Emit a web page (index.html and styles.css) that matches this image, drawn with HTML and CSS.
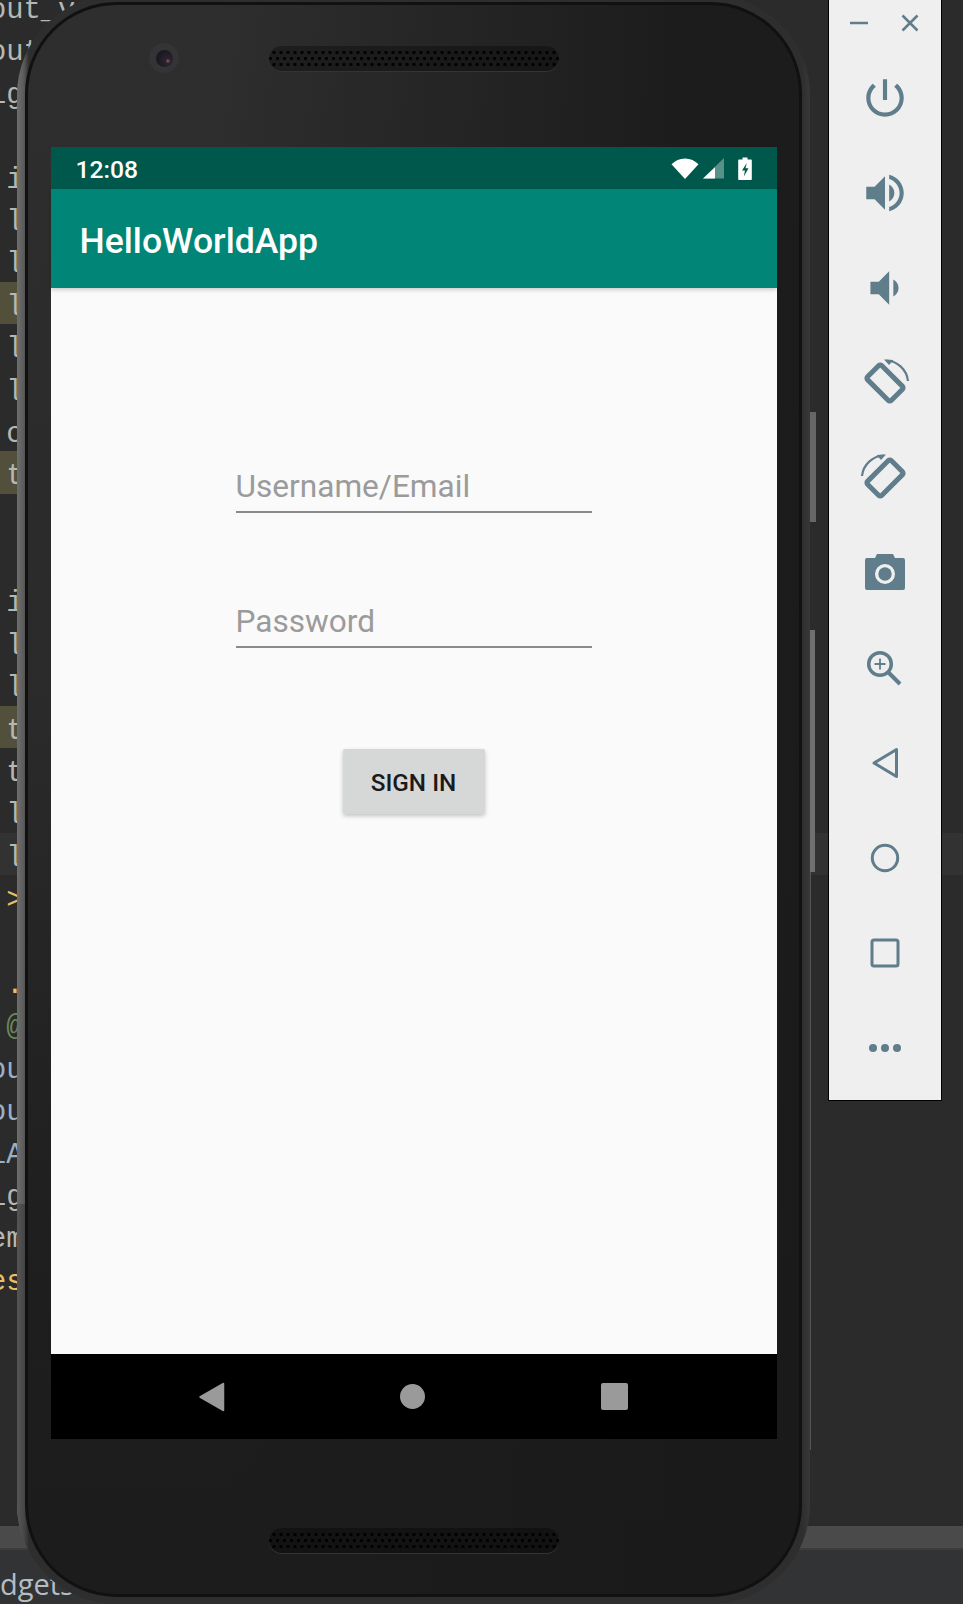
FILE: index.html
```html
<!DOCTYPE html>
<html lang="en">
<head>
    <meta charset="UTF-8">
    <meta name="viewport" content="width=device-width, initial-scale=1.0">
    <title>HelloWorldApp - Emulator</title>
    <link rel="stylesheet" href="styles.css">
</head>
<body>
    <!-- IDE behind the emulator, only the clipped left edge of the code shows -->
    <div class="editor">
        <div class="code">
            <div class="line">out_v</div>
            <div class="line">out</div>
            <div class="line">ig</div>
            <div class="line"></div>
            <div class="line">&nbsp;i</div>
            <div class="line">&nbsp;l</div>
            <div class="line">&nbsp;l</div>
            <div class="line mark">&nbsp;l</div>
            <div class="line">&nbsp;l</div>
            <div class="line">&nbsp;l</div>
            <div class="line">&nbsp;c</div>
            <div class="line mark">&nbsp;t</div>
            <div class="line"></div>
            <div class="line"></div>
            <div class="line">&nbsp;i</div>
            <div class="line">&nbsp;l</div>
            <div class="line">&nbsp;l</div>
            <div class="line mark">&nbsp;t</div>
            <div class="line">&nbsp;t</div>
            <div class="line">&nbsp;l</div>
            <div class="line current">&nbsp;l</div>
            <div class="line tag">&nbsp;&gt;</div>
            <div class="line"></div>
            <div class="line tag">..</div>
            <div class="line note">&nbsp;@</div>
            <div class="line blue">ou</div>
            <div class="line blue">ou</div>
            <div class="line blue">lA</div>
            <div class="line">ig</div>
            <div class="line">em</div>
            <div class="line tag">es</div>
        </div>
        <div class="scroll-strip"></div>
        <div class="status-strip">dgets</div>
    </div>

    <!-- emulator device -->
    <div class="phone">
        <span class="side-key power-key"></span>
        <span class="side-key volume-key"></span>
        <span class="side-key rim-line"></span>
        <div class="phone-body">
            <div class="bezel-top">
                <span class="camera"><span class="lens"></span></span>
                <span class="speaker"></span>
            </div>
            <div class="screen">
                <div class="status-bar">
                    <span class="clock">12:08</span>
                    <div class="status-icons">
                        <svg class="icon-wifi" width="28" height="21" viewBox="0 0 28 21"><path d="M14 21 0.5 6.200C4 2.600 8.600 0.400 14 0.400s10 2.200 13.500 5.800z" fill="#fff"/></svg>
                        <svg class="icon-signal" width="22" height="22" viewBox="0 0 22 22"><path d="M21 1 0 21.500h21z" fill="#fff" opacity=".35"/><path d="M12 10.300 0 21.500h12z" fill="#fff"/></svg>
                        <svg class="icon-battery" width="14" height="23" viewBox="0 0 14 23"><path fill-rule="evenodd" d="M1 2.500h3.500V.5h5v2H13a.8.8 0 0 1 .8.8v18.900a.8.8 0 0 1-.8.8H1a.8.8 0 0 1-.8-.8V3.300A.8.8 0 0 1 1 2.500zM8.800 6 4 13.500h3L5.800 19.500 10.500 11.200H7.500z" fill="#fff"/></svg>
                    </div>
                </div>
                <div class="app-bar">HelloWorldApp</div>
                <main class="content">
                    <div class="field">Username/Email</div>
                    <div class="field">Password</div>
                    <button class="sign-in">SIGN IN</button>
                </main>
                <div class="nav-bar">
                    <svg width="26" height="30" viewBox="0 0 26 30"><path d="M24.500 1.500v27L1 15z" fill="#9a9a9a" stroke="#9a9a9a" stroke-width="1.500" stroke-linejoin="round"/></svg>
                    <span class="nav-home"></span>
                    <span class="nav-recent"></span>
                </div>
            </div>
            <div class="bezel-bottom">
                <span class="speaker"></span>
            </div>
        </div>
    </div>

    <!-- emulator side toolbar -->
    <div class="toolbar">
        <div class="window-btns">
            <svg width="18" height="18" viewBox="0 0 18 18"><path d="M0 9h18" stroke="#607d8b" stroke-width="2.500"/></svg>
            <svg width="18" height="18" viewBox="0 0 18 18"><path d="M1.500 1.500l15 15M16.500 1.500l-15 15" stroke="#607d8b" stroke-width="2.500"/></svg>
        </div>
        <div class="tool">
            <svg width="50" height="50" viewBox="0 0 24 24"><path d="M13 3h-2v10h2V3zm4.830 2.170l-1.420 1.420C17.990 7.860 19 9.810 19 12c0 3.870-3.130 7-7 7s-7-3.130-7-7c0-2.190 1.010-4.140 2.580-5.420L6.170 5.170C4.230 6.820 3 9.260 3 12c0 4.970 4.030 9 9 9s9-4.030 9-9c0-2.740-1.230-5.180-3.170-6.830z"/></svg>
        </div>
        <div class="tool">
            <svg width="50" height="50" viewBox="0 0 24 24"><path d="M3 9v6h4l5 5V4L7 9H3zm13.500 3c0-1.770-1.020-3.290-2.500-4.030v8.050c1.480-.73 2.500-2.250 2.500-4.020zM14 3.230v2.060c2.890.86 5 3.540 5 6.710s-2.110 5.850-5 6.710v2.060c4.010-.91 7-4.490 7-8.770s-2.990-7.860-7-8.770z"/></svg>
        </div>
        <div class="tool">
            <svg width="50" height="50" viewBox="0 0 24 24"><path d="M18.500 12c0-1.770-1.020-3.290-2.500-4.030v8.050c1.480-.73 2.500-2.250 2.500-4.020zM5 9v6h4l5 5V4L9 9H5z"/></svg>
        </div>
        <div class="tool">
            <svg width="50" height="50" viewBox="0 0 50 50">
                <rect x="8.250" y="15" width="33.500" height="20" rx="2" transform="rotate(45 25 25)" fill="none" stroke="#607d8b" stroke-width="5"/>
                <path d="M26 2.500A23 23 0 0 1 48 23" fill="none" stroke="#607d8b" stroke-width="2.200"/>
                <path d="M24 1.500l9.500 0.500-4.500 5z"/>
            </svg>
        </div>
        <div class="tool">
            <svg width="50" height="50" viewBox="0 0 50 50">
                <rect x="8.250" y="15" width="33.500" height="20" rx="2" transform="rotate(-45 25 25)" fill="none" stroke="#607d8b" stroke-width="5"/>
                <path d="M24 2.500A23 23 0 0 0 2 23" fill="none" stroke="#607d8b" stroke-width="2.200"/>
                <path d="M26 1.500l-9.500 0.500 4.500 5z"/>
            </svg>
        </div>
        <div class="tool">
            <svg width="50" height="50" viewBox="0 0 50 50">
                <path fill-rule="evenodd" d="M7 10h8l2-4h16l2 4h8a2 2 0 0 1 2 2v28a2 2 0 0 1-2 2H7a2 2 0 0 1-2-2V12a2 2 0 0 1 2-2zM25 16a10 10 0 1 0 0 20 10 10 0 0 0 0-20z"/>
                <circle cx="25" cy="26" r="6.700"/>
            </svg>
        </div>
        <div class="tool">
            <svg width="50" height="50" viewBox="0 0 50 50">
                <circle cx="20" cy="21" r="11.300" fill="none" stroke="#607d8b" stroke-width="3.500"/>
                <path d="M28.500 29.500 40 41" stroke="#607d8b" stroke-width="4"/>
                <path d="M20 15.500v11M14.500 21h11" stroke="#607d8b" stroke-width="1.800"/>
            </svg>
        </div>
        <div class="tool">
            <svg width="50" height="50" viewBox="0 0 50 50"><path d="M36.500 11.500v27L14 25z" fill="none" stroke="#607d8b" stroke-width="3" stroke-linejoin="round"/></svg>
        </div>
        <div class="tool">
            <svg width="50" height="50" viewBox="0 0 50 50"><circle cx="25" cy="25" r="12.700" fill="none" stroke="#607d8b" stroke-width="3"/></svg>
        </div>
        <div class="tool">
            <svg width="50" height="50" viewBox="0 0 50 50"><rect x="12" y="12" width="26" height="26" rx="2" fill="none" stroke="#607d8b" stroke-width="3"/></svg>
        </div>
        <div class="tool">
            <svg width="50" height="50" viewBox="0 0 50 50"><circle cx="13" cy="25" r="4"/><circle cx="25" cy="25" r="4"/><circle cx="37" cy="25" r="4"/></svg>
        </div>
    </div>
</body>
</html>
```

FILE: styles.css
```css
html, body {
    margin: 0;
    padding: 0;
    height: 100%;
}

body {
    position: relative;
    width: 963px;
    height: 1604px;
    overflow: hidden;
    background-color: #2b2b2b; /* IDE background */
    font-family: Roboto, "Noto Sans", sans-serif;
}

/* IDE behind the emulator */
.editor {
    height: 100%;
    display: flex;
    flex-direction: column;
}

.code {
    flex: 1;
    font-family: "Liberation Mono", monospace;
    font-size: 28.800px;
    color: #b4b8b4;
    margin-top: -15px;
}

.line {
    height: 42.400px;
    line-height: 52.400px; /* glyphs sit low in the row */
    white-space: pre;
    text-indent: -11px;
}

.line.mark {
    width: 30px;
    background-color: #52503a;
}

.line.current {
    background-color: #323232;
}

.line.tag {
    color: #e8bf6a;
}

.line.note {
    color: #6a8759;
}

.line.blue {
    color: #9ab0c8;
}

.scroll-strip {
    height: 22px;
    background-color: #4a4a4a;
    flex-shrink: 0;
}

.status-strip {
    height: 56px;
    line-height: 56px;
    padding-top: 6px;
    flex-shrink: 0;
    box-sizing: border-box;
    background-color: #313335;
    border-top: 2px solid #3a3c3e;
    font-family: "Open Sans", sans-serif;
    font-size: 29px;
    color: #b4bcc4;
}

/* Phone */
.phone {
    position: absolute;
    left: 17px;
    top: -5px;
    width: 793px;
    height: 1609px;
    box-sizing: border-box;
    padding: 7px 8px;
    border-radius: 100px;
    background: linear-gradient(90deg, #6e6e6e 0, #5a5a5a 7px, #2e2e2e 12px, #2e2e2e 785px, #383838 100%);
}

.phone::before {
    content: "";
    position: absolute;
    left: 0;
    right: 0;
    bottom: 0;
    height: 400px;
    border-radius: 0 0 100px 100px;
    background: linear-gradient(90deg, #555 0, #474747 7px, #2e2e2e 12px, #2e2e2e 785px, #383838 100%);
}

.phone-body {
    position: relative;
    height: 100%;
    box-sizing: border-box;
    border: 3px solid #111;
    border-radius: 92px;
    padding: 0 20px;
    background:
        linear-gradient(90deg, rgba(26, 26, 26, 0) 25%, rgba(26, 26, 26, .9) 85%),
        linear-gradient(180deg, #2e2e2e 0, #2a2a2a 45%, #1e1e1e 80%, #1c1c1c 100%);
    display: flex;
    flex-direction: column;
}

.side-key {
    position: absolute;
    right: -6px;
    width: 6px;
    background-color: #666;
}

.power-key {
    top: 417px;
    height: 110px;
}

.volume-key {
    top: 635px;
    height: 242px;
    right: -5px;
    width: 5px;
    background-color: #707070;
}

.rim-line {
    top: 877px;
    height: 578px;
    right: -1px;
    width: 1px;
    background-color: #555;
}

.bezel-top {
    height: 142px;
    flex-shrink: 0;
    position: relative;
    display: flex;
    justify-content: center;
    box-sizing: border-box;
    padding-top: 41px;
}

.bezel-bottom {
    flex: 1;
    display: flex;
    justify-content: center;
    box-sizing: border-box;
    padding-top: 89px;
}

.camera {
    position: absolute;
    left: 101px;
    top: 38px;
    width: 30px;
    height: 30px;
    border-radius: 50%;
    background-color: #343434;
    display: flex;
    align-items: center;
    justify-content: center;
}

.lens {
    width: 17px;
    height: 17px;
    border-radius: 50%;
    background: radial-gradient(circle at 70% 65%, #a8606a 0, #2a2430 14%, #1b1a22 60%, #14141a 100%);
}

.speaker {
    width: 290px;
    height: 25px;
    border-radius: 13px;
    background-color: rgba(0, 0, 0, .3);
    background-image:
        radial-gradient(circle, #000 1.300px, transparent 1.800px),
        radial-gradient(circle, #000 1.300px, transparent 1.800px),
        radial-gradient(circle, #000 1.300px, transparent 1.800px);
    background-size: 7px 7px;
    background-repeat: repeat-x;
    background-position: 1.500px 3px, 5px 9px, 1.500px 15px;
    box-shadow: 0 1px 0 #343434;
}

/* Android screen */
.screen {
    width: 726px;
    height: 1292px;
    flex-shrink: 0;
    display: flex;
    flex-direction: column;
    align-self: center;
    background-color: #fafafa;
}

.status-bar {
    height: 42px;
    flex-shrink: 0;
    box-sizing: border-box;
    display: flex;
    align-items: center;
    justify-content: space-between;
    padding: 0 25px 0 26px;
    background-color: #00574b;
    color: #fff;
}

.clock {
    margin-left: -1px;
    padding-top: 2px;
    font-size: 24.700px;
    font-weight: 500;
}

.status-icons {
    display: flex;
    align-items: center;
    gap: 4px;
}

.icon-battery {
    margin-left: 9px;
}

.app-bar {
    height: 99px;
    flex-shrink: 0;
    box-sizing: border-box;
    padding-left: 29px;
    line-height: 104px;
    font-size: 35.600px;
    font-weight: 500;
    color: #fff;
    background-color: #008577;
    box-shadow: 0 2px 4px rgba(0, 0, 0, .18);
}

.content {
    flex: 1;
    display: flex;
    flex-direction: column;
    align-items: center;
    padding-top: 175px;
}

.field {
    width: 356px;
    height: 48px;
    margin-bottom: 85px;
    line-height: 48px;
    font-size: 31.600px;
    color: #9b9b9b;
    border-bottom: 2px solid #8a8a8a;
}

.sign-in {
    width: 142px;
    height: 65px;
    margin-top: 16px;
    padding: 2px 0 0;
    border: none;
    border-radius: 2px;
    background-color: #d6d7d7;
    box-shadow: 0 2px 4px rgba(0, 0, 0, .22);
    font-family: inherit;
    font-size: 24.300px;
    font-weight: 500;
    color: #1a1a1a;
}

.nav-bar {
    height: 85px;
    flex-shrink: 0;
    display: flex;
    align-items: center;
    justify-content: space-between;
    padding: 0 149px 0 148px;
    background-color: #000;
}

.nav-home {
    width: 25px;
    height: 25px;
    border-radius: 50%;
    background-color: #9a9a9a;
}

.nav-recent {
    width: 27px;
    height: 27px;
    border-radius: 2px;
    background-color: #9a9a9a;
}

/* Emulator toolbar */
.toolbar {
    position: absolute;
    left: 828px;
    top: 0;
    width: 114px;
    height: 1101px;
    box-sizing: border-box;
    background-color: #efefef;
    border: 1px solid #000;
    border-top: none;
    display: flex;
    flex-direction: column;
    align-items: center;
}

.window-btns {
    height: 46px;
    margin-bottom: 4px;
    width: 100%;
    box-sizing: border-box;
    display: flex;
    align-items: center;
    justify-content: space-between;
    padding: 0 22px 0 21px;
    flex-shrink: 0;
}

.tool {
    height: 95px;
    flex-shrink: 0;
    display: flex;
    align-items: center;
    justify-content: center;
}

.tool svg {
    fill: #607d8b;
}
```
